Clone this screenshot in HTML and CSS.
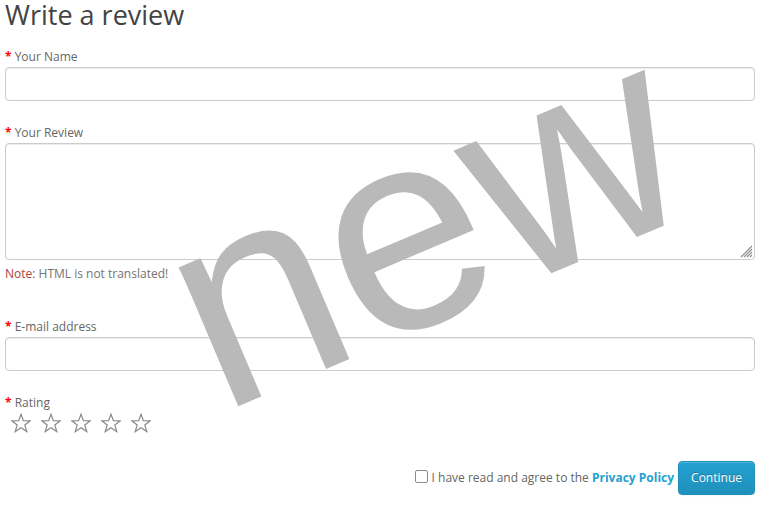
FILE: index.html
```html
<!DOCTYPE html>
<html>
<head>
<meta charset="utf-8">
<link rel="stylesheet" href="styles.css">
</head>
<body>
<div class="page">
  <h2 class="title">Write a review</h2>
  <div class="group">
    <label class="label req">Your Name</label>
    <div class="input"></div>
  </div>
  <div class="group">
    <label class="label req">Your Review</label>
    <div class="textarea">
      <svg class="grip" width="13" height="13" viewBox="0 0 13 13"><path d="M12 1 L1 12 M12 4 L4 12 M12 7 L7 12 M12 10 L10 12" stroke="#8a8a8a" stroke-width="1.1" fill="none"/></svg>
    </div>
    <div class="help"><span class="danger">Note:</span> HTML is not translated!</div>
  </div>
  <div class="group email">
    <label class="label req">E-mail address</label>
    <div class="input"></div>
  </div>
  <div class="group rating">
    <label class="label req">Rating</label>
    <div class="stars">
      <svg class="star" viewBox="0 0 20 20"><polygon points="10,1.2 12.4,7.6 19.2,7.8 13.8,12 15.8,18.6 10,14.7 4.2,18.6 6.2,12 0.8,7.8 7.6,7.6"/></svg>
      <svg class="star" viewBox="0 0 20 20"><polygon points="10,1.2 12.4,7.6 19.2,7.8 13.8,12 15.8,18.6 10,14.7 4.2,18.6 6.2,12 0.8,7.8 7.6,7.6"/></svg>
      <svg class="star" viewBox="0 0 20 20"><polygon points="10,1.2 12.4,7.6 19.2,7.8 13.8,12 15.8,18.6 10,14.7 4.2,18.6 6.2,12 0.8,7.8 7.6,7.6"/></svg>
      <svg class="star" viewBox="0 0 20 20"><polygon points="10,1.2 12.4,7.6 19.2,7.8 13.8,12 15.8,18.6 10,14.7 4.2,18.6 6.2,12 0.8,7.8 7.6,7.6"/></svg>
      <svg class="star" viewBox="0 0 20 20"><polygon points="10,1.2 12.4,7.6 19.2,7.8 13.8,12 15.8,18.6 10,14.7 4.2,18.6 6.2,12 0.8,7.8 7.6,7.6"/></svg>
    </div>
  </div>
  <div class="buttons">
    <span class="check"></span>
    <span class="agree">I have read and agree to the <b class="link">Privacy Policy</b></span>
    <span class="btn">Continue</span>
  </div>
</div>
<svg class="watermark" width="763" height="509" viewBox="0 0 763 509"><text x="220" y="414" transform="rotate(-23 220 414)">new</text></svg>
</body>
</html>
```
FILE: styles.css
```css
html, body {
  margin: 0;
  padding: 0;
  background: #fff;
}
body {
  font-family: "Open Sans", "Liberation Sans", sans-serif;
  font-size: 12px;
  color: #666;
  width: 763px;
  height: 509px;
  overflow: hidden;
  position: relative;
}
.page {
  width: 750px;
  padding-left: 5px;
}
.title {
  margin: 0;
  font-size: 27px;
  line-height: 30px;
  font-weight: normal;
  color: #444;
}
.group {
  display: flex;
  flex-direction: column;
}
.label {
  display: block;
  line-height: 17px;
  margin-bottom: 2px;
  color: #666;
}
.req::before {
  content: "* ";
  color: #f00;
  font-weight: bold;
}
.group:first-of-type { margin-top: 18px; }
.group + .group { margin-top: 23px; }
.group.email { margin-top: 36px; }
.input {
  height: 32px;
  border: 1px solid #ccc;
  border-radius: 4px;
  box-shadow: inset 0 1px 1px rgba(0,0,0,0.075);
}
.textarea {
  height: 115px;
  border: 1px solid #ccc;
  border-radius: 4px;
  box-shadow: inset 0 1px 1px rgba(0,0,0,0.075);
  position: relative;
}
.grip {
  position: absolute;
  right: 1px;
  bottom: 1px;
}
.help {
  margin-top: 5px;
  line-height: 17px;
  color: #737373;
}
.danger { color: #a94442; }
.stars {
  display: flex;
  gap: 10px;
  padding-left: 6px;
  margin-top: 0;
}
.star {
  width: 20px;
  height: 20px;
  fill: none;
  stroke: #8a8a8a;
  stroke-width: 1.2;
  stroke-linejoin: miter;
}
.buttons {
  display: flex;
  justify-content: flex-end;
  align-items: flex-start;
  margin-top: 28px;
}
.check {
  width: 11px;
  height: 11px;
  border: 1px solid #8b8b94;
  border-radius: 2px;
  margin: 9px 4px 0 0;
}
.agree {
  color: #666;
  line-height: 17px;
  margin: 8px 4px 0 0;
}
.link {
  color: #23a1d1;
  font-weight: bold;
}
.btn {
  display: inline-block;
  height: 32px;
  line-height: 32px;
  padding: 0 12px;
  color: #fff;
  border: 1px solid #1f90bb;
  border-radius: 4px;
  background: linear-gradient(#23a1d1, #1f90bb);
  box-shadow: inset 0 1px 0 rgba(255,255,255,0.2), 0 1px 2px rgba(0,0,0,0.05);
  text-shadow: 0 -1px 0 rgba(0,0,0,0.25);
}
.watermark {
  position: absolute;
  left: 0;
  top: 0;
  pointer-events: none;
}
.watermark text {
  font-family: "Liberation Sans", Arial, sans-serif;
  font-size: 286px;
  fill: #b9b9b9;
}
```
